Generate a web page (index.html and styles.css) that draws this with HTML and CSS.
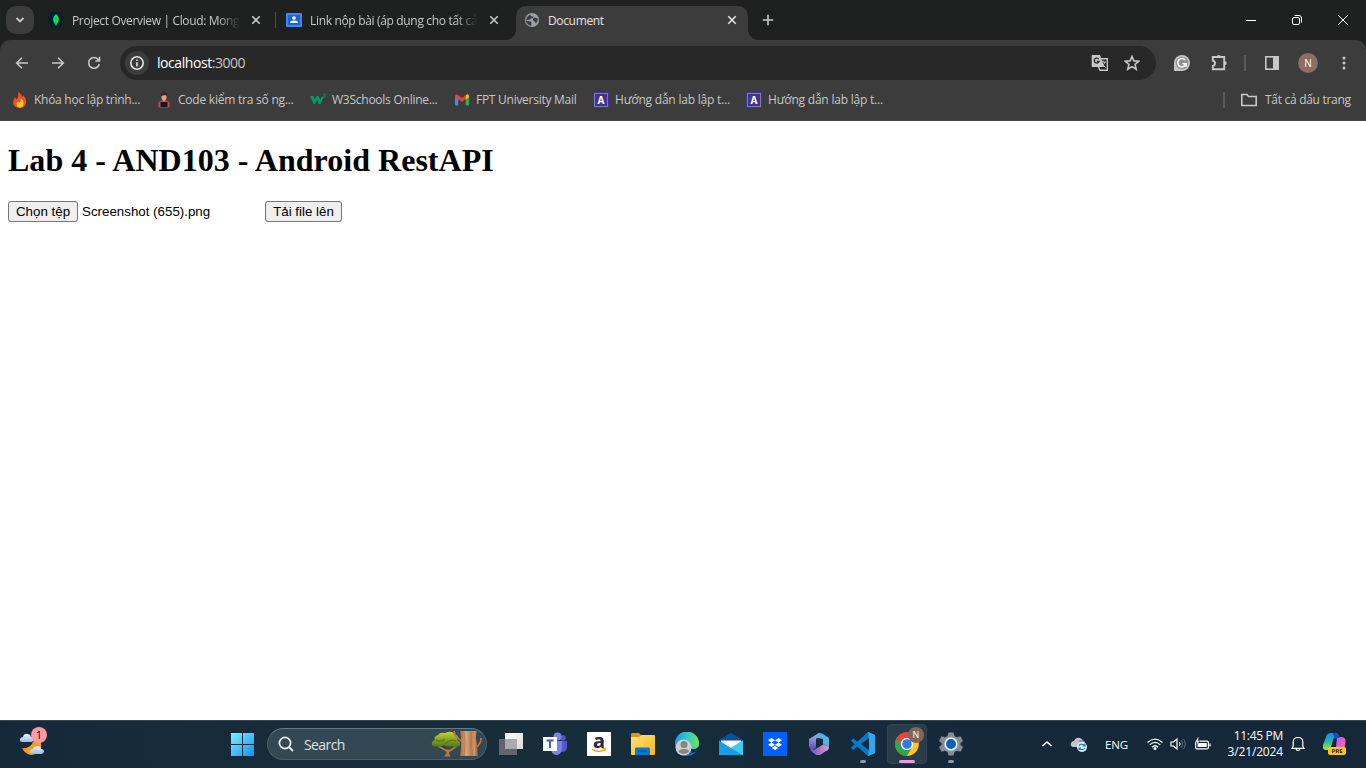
FILE: index.html
```html
<!DOCTYPE html>
<html lang="vi">
<head>
<meta charset="utf-8">
<title>Document</title>
<link rel="stylesheet" href="styles.css">
</head>
<body>
<header class="browser">
  <div class="tabstrip">
    <button class="tab-search" aria-label="Search tabs"><svg width="10" height="8" viewBox="0 0 10 8"><path d="M1.500 2 5 5.500 8.500 2" class="ln w2"/></svg></button>
    <div class="tab tab-first">
      <svg width="16" height="16" viewBox="0 0 16 16"><circle cx="8" cy="8" r="8" fill="#001e2b"/><path d="M8 2C11 5 12.300 9 8.400 12.500L8.300 14H7.700L7.600 12.500C3.700 9 5 5 8 2Z" fill="#00ed64"/><path d="M8 5v8" stroke="#00a94d" stroke-width=".8"/></svg>
      <span class="title fade t1">Project Overview | Cloud: Mong</span>
      <svg class="close" width="10" height="10" viewBox="0 0 10 10"><path d="M1.300 1.300 8.700 8.700M8.700 1.300 1.300 8.700" class="ln"/></svg>
    </div>
    <i class="tab-sep"></i>
    <div class="tab tab-second">
      <svg width="16" height="16" viewBox="0 0 16 16"><rect y="1" width="16" height="14" rx="1" fill="#4285f4"/><rect x="2" y="3" width="12" height="10" fill="#1967d2"/><circle cx="8" cy="6" r="1.800" fill="#fff"/><path d="M4 11Q4 8.600 8 8.600T12 11Z" fill="#fff"/></svg>
      <span class="title fade t2">Link nộp bài (áp dụng cho tất cả</span>
      <svg class="close" width="10" height="10" viewBox="0 0 10 10"><path d="M1.300 1.300 8.700 8.700M8.700 1.300 1.300 8.700" class="ln"/></svg>
    </div>
    <div class="tab tab-active">
      <svg width="16" height="16" viewBox="0 0 16 16"><circle cx="8" cy="8" r="7.100" fill="#9aa0a6"/><path d="M7 2.500Q6 3.500 7.500 4.500L10 4.800Q9 6.500 7 6.500 6 8 4 7.800H2.200Q3 9.500 5.500 9.300 7.500 9.500 7.500 11 7 12.500 7.500 13.800 3.800 13.500 2.200 10L2 7.500Q3 3.500 7 2.500ZM10.500 5.500 13.800 6.500Q14.200 9.500 11.800 11.500 11.500 9.500 9.800 9 8.500 8 9 6.800Z" fill="#3c3c3c"/></svg>
      <span class="title t3">Document</span>
      <svg class="close" width="10" height="10" viewBox="0 0 10 10"><path d="M1.300 1.300 8.700 8.700M8.700 1.300 1.300 8.700" class="ln bright"/></svg>
    </div>
    <svg class="newtab" width="12" height="12" viewBox="0 0 12 12"><path d="M6 .8V11.200M.8 6H11.200" class="ln"/></svg>
    <div class="window-controls">
      <svg width="12" height="12" viewBox="0 0 12 12"><path d="M1 6.500H11" class="thin"/></svg>
      <svg width="12" height="12" viewBox="0 0 12 12"><rect x="1.500" y="3.500" width="7" height="7" rx="1.500" class="thin"/><path d="M3.500 1.500H8Q10.500 1.500 10.500 4V8.500" class="thin"/></svg>
      <svg width="12" height="12" viewBox="0 0 12 12"><path d="M1 1 11 11M11 1 1 11" class="thin"/></svg>
    </div>
  </div>

  <div class="toolbar">
    <svg class="nav-icon" width="16" height="16" viewBox="0 0 16 16"><path d="M14 8H3M8 2.700 2.700 8 8 13.300" class="ln"/></svg>
    <svg class="nav-icon" width="16" height="16" viewBox="0 0 16 16"><path d="M2 8H13M8 2.700 13.300 8 8 13.300" class="ln"/></svg>
    <svg class="nav-icon" width="16" height="16" viewBox="0 0 16 16"><path d="M13.300 9A5.400 5.400 0 1 1 12.200 4.400L13.200 5.600M13.500 1.800V6H9.300" class="ln"/></svg>
    <div class="omnibox">
      <span class="site-info"><svg width="16" height="16" viewBox="0 0 16 16"><circle cx="8" cy="8" r="6.200" class="ln bright"/><path d="M8 7.200V11.400M8 4.500V6" class="ln bright"/></svg></span>
      <span class="url">localhost<span class="port">:3000</span></span>
      <svg class="translate" width="18" height="18" viewBox="0 0 18 18"><path d="M1.500 1H9L13 13H1.500Q.7 13 .7 12V2Q.7 1 1.500 1Z" fill="#c7c7c7"/><path d="M7.800 5.100A2.500 2.500 0 1 0 8.100 7.400H5.800" fill="none" stroke="#282828" stroke-width="1.300"/><path d="M10 4.700H16.300V16.300H9L7.500 13" fill="none" stroke="#c7c7c7" stroke-width="1.400"/><path d="M9.500 8H15M12 6.500V8M14 8Q13 11 10 13M10.800 9.500 14.500 13.500" fill="none" stroke="#c7c7c7"/></svg>
      <svg class="star" width="16" height="16" viewBox="0 0 16 16"><path d="M8 1.500 9.900 5.900 14.700 6.300 11.100 9.400 12.200 14.200 8 11.600 3.800 14.200 4.900 9.400 1.300 6.300 6.100 5.900Z" class="ln"/></svg>
    </div>
    <svg class="grammarly" width="16" height="16" viewBox="0 0 16 16"><path d="M8 0A8 8 0 1 1 8 16H0V8A8 8 0 0 1 8 0Z" fill="#c4c4c4"/><circle cx="8" cy="8" r="6.200" fill="#8f8f8f"/><path d="M11.300 5.200A4.200 4.200 0 1 0 12 8.800H8.500M12 8.300V11.800" fill="none" stroke="#fff" stroke-width="1.600"/></svg>
    <svg class="extensions" width="18" height="18" viewBox="0 0 18 18"><path d="M2.800 3H14.200V15.200H2.800V12Q5 11.500 5 9.300T2.800 6.500Z" class="ln w2"/><path d="M6.700 3A2.100 2.100 0 0 1 10.900 3ZM14.500 6.900A2.200 2.200 0 0 1 14.500 11.300Z" fill="#c7c7c7"/></svg>
    <i class="toolbar-sep"></i>
    <svg class="sidepanel" width="16" height="16" viewBox="0 0 16 16"><rect x="1.800" y="1.800" width="12.400" height="12.400" class="ln"/><path d="M9 2H14V14H9Z" fill="#c7c7c7"/></svg>
    <span class="avatar">N</span>
    <svg class="menu" width="4" height="16" viewBox="0 0 4 16"><g fill="#c7c7c7"><circle cx="2" cy="3" r="1.500"/><circle cx="2" cy="8" r="1.500"/><circle cx="2" cy="13" r="1.500"/></g></svg>
  </div>

  <nav class="bookmarks">
    <a class="bookmark b1"><svg width="16" height="16" viewBox="0 0 16 16"><path d="M6 0Q10 2 10 5 11.500 4.500 11 3 15 7 14 11 13 16 8 16 2 16 1.200 11 .8 8 3 5 3.500 7 4.500 7.500 7 5 6 0Z" fill="#f4511e"/><path d="M9 6Q12 9 11.500 12 11 15.500 8 15.500 4.500 15.500 4.500 12 4.500 10 6 9.500 7 10.500 7.500 10.500 9 9 9 6Z" fill="#ffca28"/></svg><span class="s1">Khóa học lập trình...</span></a>
    <a class="bookmark b2"><svg width="16" height="16" viewBox="0 0 16 16"><path d="M2.500 15.500V11Q2.500 8.500 8 8.500T13.500 11V15.500Z" fill="#d84350"/><path d="M5.500 2.500H10.500V6Q10 9 8 9.500 6 9 5.500 6Z" fill="#e8a07a"/><path d="M5 4Q4.500.5 8 .5T11 4L9 3Z" fill="#3a2530"/><path d="M4.500 10H11.500V15H4.500Z" fill="#19151d"/></svg><span class="s2">Code kiểm tra số ng...</span></a>
    <a class="bookmark b3"><svg width="16" height="16" viewBox="0 0 16 16"><path d="M0 4H3.200L5 7.500 6.500 4H8.500L10.200 7.500 11.800 4.500H14L10.500 12H9L7 8 5 12H3.700Z" fill="#069b66"/><path d="M13.300 2.300H15.200L14.300 3.500Q15.500 3.700 15.200 4.800 14.700 5.800 13.300 5.400" fill="none" stroke="#069b66" stroke-width=".8"/></svg><span class="s3">W3Schools Online...</span></a>
    <a class="bookmark b4"><svg width="16" height="16" viewBox="0 0 16 16"><path d="M1 4 4.300 6.300V13.500H2Q1 13.500 1 12.500Z" fill="#4285f4"/><path d="M11.700 6.300 15 4V12.500Q15 13.500 14 13.500H11.700Z" fill="#34a853"/><path d="M1 4Q1.500 1.500 4 3L8 6 11.700 3.200V7L8 9.800 1 5Z" fill="#ea4335"/><path d="M11.700 3.200Q14.500 1 15 4V5.300L11.700 7.500Z" fill="#fbbc04"/></svg><span class="s4">FPT University Mail</span></a>
    <a class="bookmark b5"><span class="letter-icon">A</span><span class="s5">Hướng dẫn lab lập t...</span></a>
    <a class="bookmark b6"><span class="letter-icon">A</span><span class="s5">Hướng dẫn lab lập t...</span></a>
    <i class="bookmark-sep"></i>
    <a class="bookmark all"><svg width="18" height="16" viewBox="0 0 18 16"><path d="M1.800 2.500H7L8.500 4.500H16.200V13.500H1.800Z" class="ln"/></svg><span class="s7">Tất cả dấu trang</span></a>
  </nav>
</header>

<main class="page">
  <h1>Lab 4 - AND103 - Android RestAPI</h1>
  <div class="upload">
    <button class="choose">Chọn tệp</button><span class="filename">Screenshot (655).png</span><button class="send">Tải file lên</button>
  </div>
</main>

<footer class="taskbar">
  <div class="weather"><svg width="28" height="30" viewBox="0 0 28 30"><defs><linearGradient id="cl" x2="0" y2="1"><stop stop-color="#edf4ff"/><stop offset="1" stop-color="#9dbbe9"/></linearGradient></defs><path d="M3 19Q11 20 14 13L18 9Q23 11 22 18 19 26 12 26 6 25 3 19Z" fill="#f59c1c"/><path d="M4 13Q0 13 1 10 2 8 4 8 5 4 9 5 11 5 12 8 15 8 15 11 14 13 12 13Z" fill="url(#cl)"/><path d="M14 25Q10 25 11 22 12 20 14 20 15 17 19 17 22 17 22 20 25 20 25 23 24 25 22 25Z" fill="url(#cl)"/></svg><span class="badge">1</span></div>
  <svg class="start" width="24" height="24" viewBox="0 0 24 24"><defs><linearGradient id="win" x2="1" y2="1"><stop stop-color="#7bf2fd"/><stop offset="1" stop-color="#1190f5"/></linearGradient></defs><path d="M1 1H12V12H1ZM13 1H24V12H13ZM1 13H12V24H1ZM13 13H24V24H13Z" fill="url(#win)"/></svg>
  <div class="search">
    <svg width="16" height="16" viewBox="0 0 16 16"><circle cx="7" cy="7" r="5.600" fill="none" stroke="#e7edf1" stroke-width="1.700"/><path d="M11 11 15 15" stroke="#e7edf1" stroke-width="1.800"/></svg>
    <span>Search</span>
    <svg class="tree" width="52" height="30" viewBox="0 0 52 30"><defs><linearGradient id="bark"><stop stop-color="#a66b42"/><stop offset=".35" stop-color="#dca577"/><stop offset=".6" stop-color="#bd7e50"/><stop offset=".8" stop-color="#d29564"/><stop offset="1" stop-color="#8a5633"/></linearGradient><linearGradient id="leaf" x2="0" y2="1"><stop stop-color="#c3d633"/><stop offset="1" stop-color="#4c7417"/></linearGradient></defs><path d="M7 17 15 21.500 17 23 26 17" fill="none" stroke="#b8783e" stroke-width="1.800"/><path d="M14.500 20.500H18.500L18 24 19.500 27.500H13L15.500 24Z" fill="#b8783e"/><path d="M1 16Q0 12 4 11 2 8 7 6 9 3 14 4 20 1 24 5 29 7 26 11 31 13 28 17 24 20 21 17 16 19 13 16 9 19 6 17 3 18 1 16Z" fill="url(#leaf)"/><path d="M5 11Q10 14 14 10M14 15Q19 10 25 12" stroke="#55771c" stroke-width="1.200" fill="none"/><path d="M29 2H46Q44 9 46 14L47 27H29Q31 14 29 2Z" fill="url(#bark)"/><path d="M30 12 24 6 23 2M46 18Q50 14 50 9" stroke="#b87545" stroke-width="1.700" fill="none"/><path d="M33 3Q35 14 33 27M41 3Q39 16 42 27" stroke="#a8714a" stroke-width=".6" fill="none"/></svg>
  </div>
  <div class="apps">
    <span class="app"><svg viewBox="0 0 24 24"><defs><linearGradient id="tv" x2="1" y2="1"><stop stop-color="#fff"/><stop offset="1" stop-color="#d8d8d8"/></linearGradient></defs><path d="M6 1H24V17H6Z" fill="url(#tv)"/><path d="M0 7H18V23H0Z" fill="#62666a"/><path d="M6 7H18V17H6Z" fill="#a8abad"/></svg></span>
    <span class="app"><svg viewBox="0 0 24 24"><circle cx="20" cy="6" r="2.700" fill="#5059c9"/><circle cx="14.500" cy="4.500" r="4" fill="#7b83eb"/><path d="M15 9H24V15Q24 20 19 20 15 19 15 16Z" fill="#5059c9"/><path d="M8 9H19V17Q18 23 13 23 8 22 8 17Z" fill="#7b83eb"/><rect y="5" width="14" height="14" fill="#fff"/><path d="M3.500 8.500H10.500M7 8.500V16" stroke="#5059c9" stroke-width="2"/></svg></span>
    <span class="app"><span class="amazon">a<svg viewBox="0 0 16 5"><path d="M1 1Q7 5.500 13.500 1.500" fill="none" stroke="#f90" stroke-width="1.400"/><path d="M11.500 .5H14.500L13.800 3" fill="none" stroke="#f90"/></svg></span></span>
    <span class="app"><svg viewBox="0 0 24 24"><defs><linearGradient id="fo" x2="1" y2="1"><stop stop-color="#ffe37a"/><stop offset="1" stop-color="#f8b51a"/></linearGradient></defs><path d="M0 2.500Q0 1 1 1H8L11 4H20V9H0Z" fill="#d99b0c"/><path d="M0 5H8L10.500 3H23Q24 3 24 4V22Q24 23 23 23H1Q0 23 0 22Z" fill="url(#fo)"/><path d="M4 23V17Q4 15.500 5.500 15.500H17.500Q19 15.500 19 17V23Z" fill="#0879ce"/><path d="M7 18.500H16V20H7Z" fill="#035ba5"/></svg></span>
    <span class="app"><svg viewBox="0 0 24 24"><defs><linearGradient id="ed"><stop stop-color="#159ce4"/><stop offset=".5" stop-color="#31c8cc"/><stop offset="1" stop-color="#6ce64d"/></linearGradient></defs><circle cx="12" cy="12" r="12" fill="#126ac0"/><path d="M0 12A12 12 0 0 1 24 11Q24 17 18 17 13 17 14 13 14 8 8 8 2 8 0 14Z" fill="url(#ed)"/><path d="M15 16Q19 19 24 15L23 19 17 21Z" fill="#142c44"/><circle cx="8.500" cy="15.500" r="8" fill="#cfd0d0"/><circle cx="9" cy="12.500" r="3.500" fill="#858585"/><path d="M3.500 20Q3.500 17 9 17T14 20Q9 24 3.500 20Z" fill="#858585"/></svg></span>
    <span class="app"><svg viewBox="0 0 24 24"><path d="M0 8 12 1 24 8V13H0Z" fill="#08509a"/><path d="M2 8.500H22V14L12 19 2 14Z" fill="#f8f8f8"/><path d="M24 8.500V23H0Z" fill="#43c9f4"/><path d="M0 8.500 12 16 24 23H0Z" fill="#189ee4"/><path d="M12 16 24 8.500V23Z" fill="#43c9f4"/></svg></span>
    <span class="app"><svg viewBox="0 0 24 24"><path d="M0 0H24V24H0Z" fill="#0061fe"/><path d="M8.500 6 12 8.200 8.500 10.500 5 8.200ZM15.500 6 19 8.200 15.500 10.500 12 8.200ZM8.500 10.500 12 12.700 8.500 15 5 12.700ZM15.500 10.500 19 12.700 15.500 15 12 12.700ZM12 13.700 15.400 15.900 12 18 8.600 15.900Z" fill="#fff"/></svg></span>
    <span class="app"><svg viewBox="0 0 24 24"><defs><linearGradient id="m1" x2="0" y2="1"><stop stop-color="#a7b2f4"/><stop offset="1" stop-color="#5d4aae"/></linearGradient><linearGradient id="m2" x2="1"><stop stop-color="#6b53b9"/><stop offset="1" stop-color="#df9cda"/></linearGradient></defs><path d="M12 1 15 2 9 7V16L5 18 2 15V7Z" fill="url(#m1)"/><path d="M10 3Q13 0 16 2L22 6V15L16 12V7L10 6Z" fill="#55b1df"/><path d="M3 15 7 18 16 12 22 15Q22 18 19 19L13 23H9L4 19Z" fill="url(#m2)"/><path d="M9 8.500 13 6.500 16 8.500V12.500L11 15.500 9 14Z" fill="#172b39"/></svg></span>
    <span class="app"><svg viewBox="0 0 24 24"><path d="M17 0 24 3V21L17 24 0 9 2 6.500 18 18V6L2 18 0 15.500Z" fill="#0779ca"/><path d="M17 0 24 3V21L17 24 18 18V6Z" fill="#30a7ef"/></svg><i class="running"></i></span>
    <span class="app selected"><svg viewBox="0 0 24 24"><circle cx="12" cy="12" r="12" fill="#eb4335"/><path d="M1.600 6A12 12 0 0 0 12 24L17.200 15H6.800Z" fill="#29a74a"/><path d="M12 24A12 12 0 0 0 22.400 6.500H12L17.200 15Z" fill="#fcc924"/><circle cx="12" cy="12" r="6.200" fill="#fff"/><circle cx="12" cy="12" r="4.800" fill="#3478e8"/></svg><b class="profile">N</b><i class="running"></i></span>
    <span class="app"><svg viewBox="0 0 24 24"><path d="M9.500 .5H14.500L15.500 4 18 5.200 21.500 4.200 24 9 21.500 11 21.500 13 24 15 21.500 19.800 18 18.800 15.500 20 14.500 23.500H9.500L8.500 20 6 18.800 2.500 19.800 0 15 2.500 13V11L0 9 2.500 4.200 6 5.200 8.500 4Z" fill="#858d94"/><circle cx="12" cy="12" r="6.700" fill="#e8edf1"/><circle cx="12" cy="12" r="4.900" fill="#0b63b4"/></svg><i class="running"></i></span>
  </div>
  <div class="tray">
    <svg class="chev" width="12" height="8" viewBox="0 0 12 8"><path d="M1.500 6 6 2 10.500 6" class="tray-line bold"/></svg>
    <svg class="cloud" width="18" height="16" viewBox="0 0 18 16"><path d="M3 11Q0 10 1 7 2 5 4 5 6 1 10 2 13 3 13 6 16 6 16 9L14 11Z" fill="#c2c4c6"/><path d="M8 5Q12 2 15 6L14 8Z" fill="#8e949a"/><circle cx="12" cy="11" r="5" fill="#e9f4fd"/><path d="M9 10Q10 7.500 13 8.500L15 10M15 7.500V10H12.500M15 12Q13 14.500 10 13L9 12M9 14V12H11" stroke="#1475cc" stroke-width="1.200" fill="none"/></svg>
    <span class="lang">ENG</span>
    <svg class="wifi" width="16" height="14" viewBox="0 0 16 14"><path d="M.5 5.500Q8-1.200 15.500 5.500M2.700 7.900Q8 3 13.300 7.900M5 10.200Q8 7.300 11 10.200" class="tray-line"/><circle cx="8" cy="11.600" r="1.500" fill="#fff"/></svg>
    <svg class="sound" width="17" height="14" viewBox="0 0 17 14"><path d="M1 5H3.500L7 2V12L3.500 9H1Z" class="tray-line"/><path d="M9.300 5Q10.600 7 9.300 9" class="tray-line"/><path d="M11.500 3.500Q14 7 11.500 10.500M13.500 2Q17 7 13.500 12" stroke="#66737d" fill="none"/></svg>
    <svg class="battery" width="17" height="14" viewBox="0 0 17 14"><rect x="1.600" y="4.100" width="12.800" height="7.800" rx="1.500" class="tray-line"/><path d="M3.500 6H12.700V10H3.500Z" fill="#fff"/><path d="M16 6.500V9.500" class="tray-line"/><path d="M4 0 1 5H3L2 9 6 4H4L5 0Z" fill="#fff" stroke="#142a3a" stroke-width=".5"/></svg>
    <div class="clock"><span class="time">11:45 PM</span><span>3/21/2024</span></div>
    <svg class="bell" width="14" height="16" viewBox="0 0 14 16"><path d="M2.200 10V6Q2.200 1.500 7 1.500T11.800 6V10L13 12.300H1ZM5 12.500Q5.200 14.500 7 14.500T9 12.500" class="tray-line"/></svg>
    <svg class="copilot" width="24" height="24" viewBox="0 0 24 24"><defs><linearGradient id="c1" x2="0" y2="1"><stop stop-color="#1689f1"/><stop offset=".5" stop-color="#20bbae"/><stop offset="1" stop-color="#c5db28"/></linearGradient><linearGradient id="c2" x2="1" y2="1"><stop stop-color="#8e6cff"/><stop offset=".5" stop-color="#e45ad0"/><stop offset="1" stop-color="#ff8c61"/></linearGradient></defs><path d="M15 5H19Q24 5 23.500 10L22.500 16Q22 19 18 19H11Q13 19 14 15Z" fill="url(#c2)"/><path d="M4 5Q5 1 9 1H14Q16 1 17 5H14Q11.500 5 11 8L9 15Q8 18 5 18H4Q0 18 1 13Z" fill="url(#c1)"/><path d="M11 1H14Q16 1 17.500 6H14Q13 6 12.500 7Z" fill="#2145d4"/></svg><span class="pre">PRE</span>
  </div>
</footer>
</body>
</html>
```
FILE: styles.css
```css
* { box-sizing: border-box; }
body { margin: 0; width: 1366px; height: 768px; overflow: hidden; display: flex; flex-direction: column; background: #fff; font-family: "Open Sans", "Noto Sans", sans-serif; }
svg { display: block; flex: none; }
.ln { fill: none; stroke: #c7c7c7; stroke-width: 1.6; }
.w2 { stroke-width: 1.9; }
.bright { stroke: #e3e3e3; }
.thin { fill: none; stroke: #fff; stroke-width: 1; }
.tray-line { fill: none; stroke: #fff; stroke-width: 1.2; }
.bold { stroke-width: 1.6; }

.browser { height: 121px; flex: none; background: #1f2120; }
.tabstrip { height: 40px; display: flex; align-items: center; }
.tab-search { width: 28px; height: 28px; margin-left: 6px; border: 0; border-radius: 10px; padding: 0; background: #3c3c3c; display: flex; align-items: center; justify-content: center; flex: none; }
.tab { display: flex; align-items: center; font-size: 12px; color: #c7c7c7; flex: none; }
.tab .title { flex: none; white-space: nowrap; margin-left: 8px; line-height: 20px; padding-top: 1px; }
.tab-first { width: 227px; margin-left: 14px; }
.tab-second { width: 218px; margin-left: 10px; }
.tab .fade { width: 168px; mask-image: linear-gradient(to right, #000 146px, transparent 168px); }
.tab .close { margin-left: 11px; }
.t1 { letter-spacing: -.35px; }
.t2 { letter-spacing: -.33px; }
.t3 { letter-spacing: -.35px; }
.tab-sep { width: 1px; height: 16px; background: #4b4d4c; flex: none; }
.tab-active { position: relative; width: 232px; height: 34px; align-self: flex-end; margin-left: 12px; padding: 0 11px 6px 8px; border-radius: 10px 10px 0 0; background: #3c3c3c; color: #e3e3e3; }
.tab-active .close { margin-left: auto; }
.tab-active::before, .tab-active::after { content: ""; position: absolute; bottom: 0; width: 10px; height: 10px; }
.tab-active::before { left: -10px; background: radial-gradient(circle at 0 0, transparent 9.5px, #3c3c3c 10px); }
.tab-active::after { right: -10px; background: radial-gradient(circle at 100% 0, transparent 9.5px, #3c3c3c 10px); }
.newtab { margin-left: 14px; }
.window-controls { display: flex; gap: 34px; margin-left: auto; margin-right: 17px; }

.toolbar { height: 46px; display: flex; align-items: center; background: #3c3c3c; border-radius: 10px 10px 0 0; padding-left: 14px; }
.nav-icon { margin-right: 20px; }
.omnibox { width: 1036px; height: 34px; margin-left: -2px; border-radius: 17px; background: #282828; display: flex; align-items: center; padding: 0 16px 0 5px; }
.site-info { width: 24px; height: 24px; border-radius: 12px; background: #3c3c3c; display: flex; align-items: center; justify-content: center; }
.url { font-size: 14px; letter-spacing: -.44px; color: #fff; margin-left: 8px; padding-bottom: 2px; }
.port { color: #c7c7c7; }
.translate { margin-left: auto; margin-right: 15px; }
.grammarly { margin-left: 18px; }
.extensions { margin-left: 20px; }
.toolbar-sep { width: 2px; height: 16px; background: #5b5b5b; margin-left: 16px; }
.sidepanel { margin-left: 18px; }
.avatar { width: 20px; height: 20px; border-radius: 50%; background: #8d6e63; color: #fff; display: flex; align-items: center; justify-content: center; font-size: 10px; margin-left: 18px; }
.menu { margin-left: 24px; }

.bookmarks { height: 35px; display: flex; align-items: center; background: #3c3c3c; padding: 0 15px 7px 12px; border-bottom: 1px solid #474747; color: #c7c7c7; font-size: 12px; }
.bookmark { display: flex; align-items: center; gap: 6px; white-space: nowrap; flex: none; }
.b1 { width: 144px; } .b2 { width: 154px; } .b3 { width: 144px; } .b4 { width: 139px; } .b5, .b6 { width: 153px; }
.s1 { letter-spacing: -.27px; } .s2 { letter-spacing: -.23px; } .s3 { letter-spacing: -.25px; } .s4 { letter-spacing: -.27px; } .s5 { letter-spacing: -.22px; } .s7 { letter-spacing: -.29px; }
.letter-icon { width: 16px; height: 16px; background: #40358a; border: 1px solid #40358a; outline: 1px solid #8078b8; outline-offset: -2px; color: #fff; font: bold 10px/14px "Open Sans", sans-serif; text-align: center; }
.bookmark-sep { width: 2px; height: 16px; background: #5b5b5b; margin-left: auto; }
.all { width: 111px; margin-left: 15px; gap: 7px; }

.page { flex: 1; padding: 0 8px; color: #000; }
h1 { font: bold 32px/37px "Liberation Serif", serif; letter-spacing: .03px; margin: 21px 0 22px; }
.upload { display: flex; align-items: center; height: 21px; font: 13.333px "Liberation Sans", sans-serif; }
.upload button { height: 21px; padding: 0; font: 13.333px "Liberation Sans", sans-serif; color: #000; background: #efefef; border: 1px solid #767676; border-radius: 3px; }
.choose { width: 70px; }
.filename { width: 183px; margin-left: 4px; }
.send { width: 77px; }

.taskbar { height: 48px; flex: none; display: flex; align-items: center; color: #fff; box-shadow: inset 0 1px #344650; background: linear-gradient(90deg, #16293b, #172e3a 38%, #15293a 70%, #142839); }
.weather { position: relative; width: 28px; margin-left: 19px; }
.badge { position: absolute; left: 12px; top: -2px; width: 16px; height: 16px; border-radius: 50%; background: #ff99a4; color: #111; text-align: center; font-size: 11px; line-height: 16px; }
.start { margin-left: 183px; }
.search { width: 220px; height: 32px; margin-left: 13px; border: 1px solid #485d68; border-top-color: #667983; border-radius: 16px; background: #344853; display: flex; align-items: center; padding: 0 3px 0 10px; font-size: 14px; letter-spacing: -.6px; color: #dce2e6; }
.search span { margin-left: 10px; }
.tree { margin-left: auto; }
.apps { display: flex; margin-left: 2px; }
.app { position: relative; width: 40px; height: 40px; margin: 0 2px; display: flex; align-items: center; justify-content: center; border-radius: 4px; }
.app > svg { width: 24px; height: 24px; }
.selected { background: #2a3c49; border: 1px solid #314451; }
.running { position: absolute; bottom: 1px; left: 17px; width: 6px; height: 3px; border-radius: 2px; background: #9099a0; }
.selected .running { width: 16px; left: 11px; bottom: 0; background: #dda1ea; }
.profile { position: absolute; top: 2px; right: 2px; width: 16px; height: 16px; border-radius: 50%; background: #81665d; font-size: 9px; line-height: 16px; text-align: center; font-weight: 400; }
.amazon { width: 24px; height: 24px; background: #fff; color: #222e3c; font: bold 20px/18px "Noto Sans", sans-serif; text-align: center; }
.amazon svg { width: 16px; height: 5px; margin: -2px auto 0; }
.tray { position: relative; width: 326px; height: 48px; margin-left: auto; display: flex; align-items: center; }
.chev { margin-left: 1px; }
.cloud { margin-left: 17px; }
.lang { width: 24px; margin-left: 17px; font-size: 11.5px; letter-spacing: -.2px; }
.wifi { margin-left: 18px; }
.sound { margin-left: 7px; }
.battery { margin-left: 7px; }
.clock { width: 72px; display: flex; flex-direction: column; align-items: flex-end; font-size: 12px; line-height: 16px; letter-spacing: -.15px; white-space: nowrap; padding-bottom: 1px; }
.time { letter-spacing: -.3px; }
.bell { margin-left: 8px; }
.copilot { margin-left: 17px; }
.pre { position: absolute; left: 288px; top: 27px; width: 18px; height: 8px; border-radius: 2px; background: #ffc90e; color: #222; font-size: 6px; line-height: 8px; font-weight: 700; text-align: center; }
```
